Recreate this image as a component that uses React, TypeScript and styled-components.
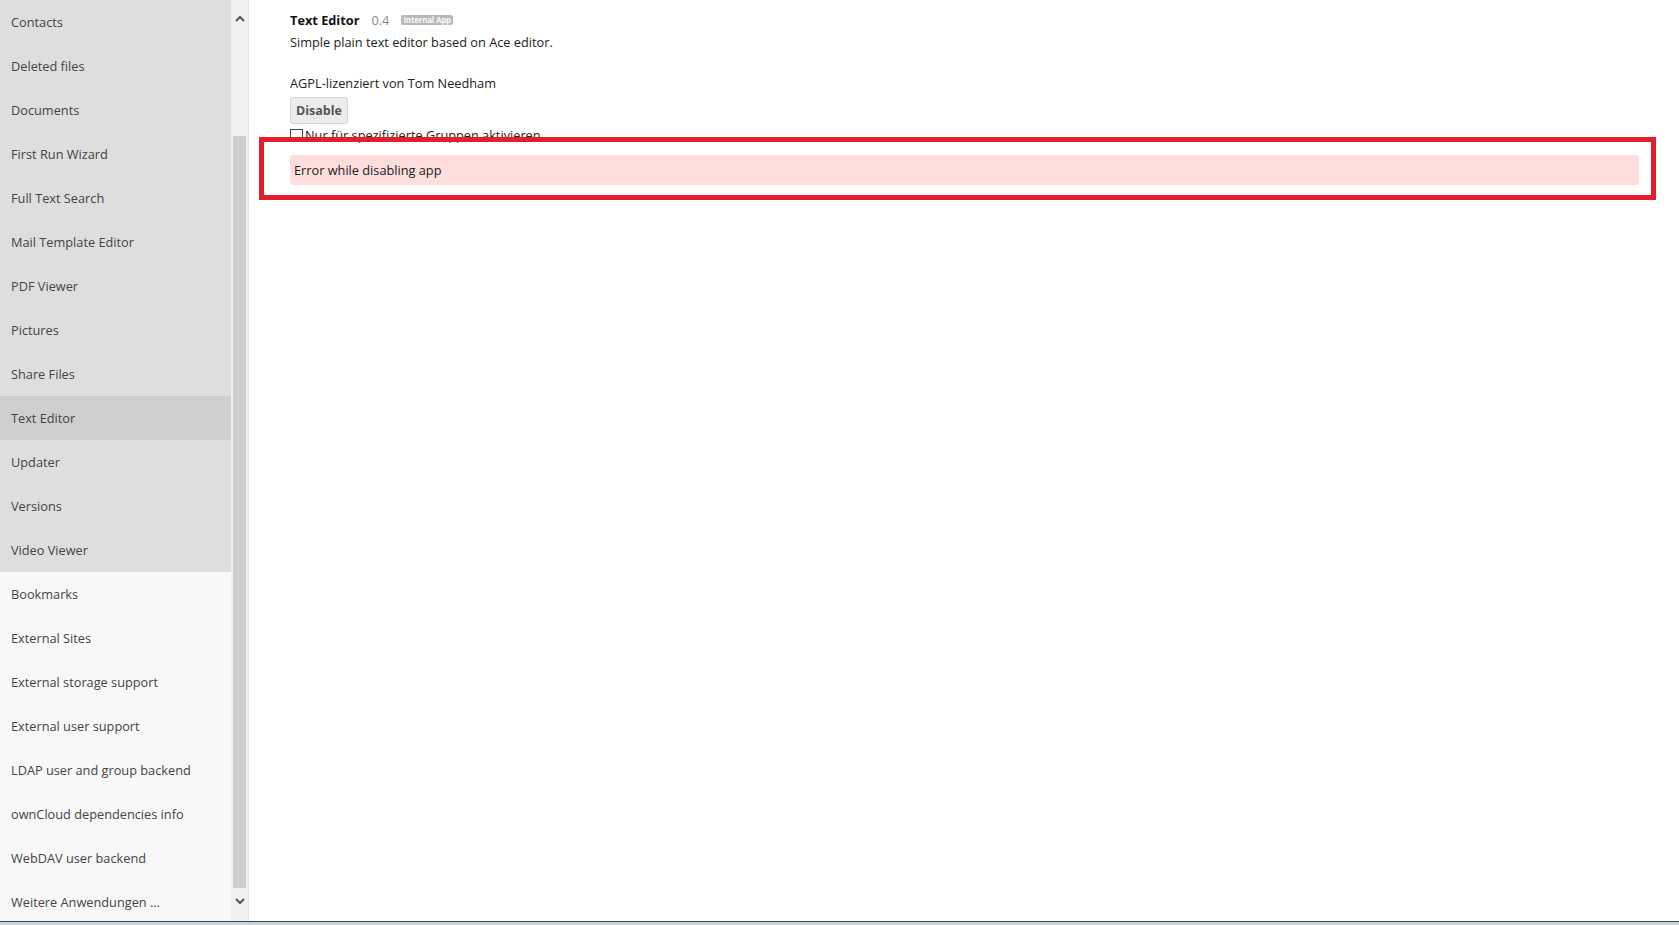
import { createGlobalStyle, styled } from "styled-components";

const GlobalStyle = createGlobalStyle`
  html, body {
    margin: 0;
    padding: 0;
    background: #ffffff;
    font-family: "Open Sans", "Liberation Sans", sans-serif;
    font-size: 12.75px;
    color: #222;
    overflow: hidden;
  }
`;

const Page = styled.div`
  display: flex;
  flex-direction: column;
  height: 100vh;
  position: relative;
`;

const Main = styled.div`
  display: flex;
  flex: 1;
  min-height: 0;
`;

const Sidebar = styled.nav`
  display: flex;
  width: 248px;
  flex-shrink: 0;
  border-right: 1px solid #e4e4e4;
  overflow: hidden;
`;

const AppList = styled.ul`
  list-style: none;
  margin: 0;
  padding: 0;
  width: 231px;
  flex-shrink: 0;
`;

const AppItem = styled.li<{ $enabled: boolean; $active?: boolean }>`
  height: 44px;
  flex-shrink: 0;
  display: flex;
  align-items: center;
  padding-left: 11px;
  color: #444;
  background: ${(p) => (p.$active ? "#cfcfcf" : p.$enabled ? "#dedede" : "#f8f8f8")};
  white-space: nowrap;
`;

const ScrollBar = styled.div`
  width: 17px;
  display: flex;
  flex-direction: column;
  background: #f0f0f0;
`;

const ScrollArrow = styled.div<{ $size: number; $after?: number }>`
  height: ${(p) => p.$size}px;
  margin-bottom: ${(p) => p.$after ?? 0}px;
  display: flex;
  align-items: center;
  justify-content: center;
  flex-shrink: 0;
`;

const ScrollTrack = styled.div`
  flex: 1;
  display: flex;
  flex-direction: column;
  padding: 100px 2px 0 2px;
`;

const ScrollThumb = styled.div`
  flex: 1;
  background: #cdcdcd;
`;

const Content = styled.main`
  flex: 1;
  padding: 10px 40px 0 41px;
`;

const TitleRow = styled.div`
  display: flex;
  align-items: center;
  gap: 12px;
  line-height: 20px;
`;

const AppName = styled.span`
  font-weight: bold;
  color: #111;
`;

const Version = styled.span`
  color: #888;
`;

const Badge = styled.span`
  font-size: 8px;
  font-weight: bold;
  line-height: 10px;
  padding: 0 2px;
  border-radius: 2px;
  background: #b8b8b8;
  color: #f8f8f8;
  letter-spacing: -0.2px;
`;

const Line = styled.p<{ $gap: number }>`
  margin: ${(p) => p.$gap}px 0 0;
  line-height: 20px;
`;

const Button = styled.button`
  display: block;
  margin-top: 4px;
  height: 27px;
  padding: 0 5px;
  font-family: inherit;
  font-size: 12.5px;
  font-weight: bold;
  color: #555;
  background: #ececec;
  border: 1px solid #d6d6d6;
  border-radius: 3px;
`;

const CheckRow = styled.label`
  display: flex;
  align-items: center;
  gap: 2px;
  margin-top: 1px;
  height: 20px;
`;

const CheckBox = styled.input`
  appearance: none;
  margin: 0;
  width: 13px;
  height: 13px;
  border: 1px solid #444;
  background: #fff;
`;

const ErrorBox = styled.div`
  margin-top: 10px;
  height: 30px;
  display: flex;
  align-items: center;
  padding: 0 4px;
  background: #ffdddd;
  border-radius: 3px;
  color: #222;
`;

const Highlight = styled.div`
  position: absolute;
  left: 259px;
  top: 137px;
  width: 1397px;
  height: 63px;
  box-sizing: border-box;
  border: 5px solid #e41f2b;
  pointer-events: none;
`;

const TaskbarEdge = styled.div`
  height: 3px;
  flex-shrink: 0;
  border-top: 1px solid #3a4656;
  background: #cad3dc;
`;

const enabledApps = [
  "Contacts",
  "Deleted files",
  "Documents",
  "First Run Wizard",
  "Full Text Search",
  "Mail Template Editor",
  "PDF Viewer",
  "Pictures",
  "Share Files",
  "Text Editor",
  "Updater",
  "Versions",
  "Video Viewer",
];

const otherApps = [
  "Bookmarks",
  "External Sites",
  "External storage support",
  "External user support",
  "LDAP user and group backend",
  "ownCloud dependencies info",
  "WebDAV user backend",
  "Weitere Anwendungen …",
];

function Chevron({ up }: { up?: boolean }) {
  return (
    <svg width="10" height="7" viewBox="0 0 10 7">
      <path
        d={up ? "M1 6 L5 2 L9 6" : "M1 1 L5 5 L9 1"}
        fill="none"
        stroke="#555"
        strokeWidth="2"
      />
    </svg>
  );
}

export default function App() {
  return (
    <>
      <GlobalStyle />
      <Page>
        <Main>
          <Sidebar>
            <AppList>
              {enabledApps.map((name) => (
                <AppItem key={name} $enabled $active={name === "Text Editor"}>
                  {name}
                </AppItem>
              ))}
              {otherApps.map((name) => (
                <AppItem key={name} $enabled={false}>
                  {name}
                </AppItem>
              ))}
            </AppList>
            <ScrollBar>
              <ScrollArrow $size={36}>
                <Chevron up />
              </ScrollArrow>
              <ScrollTrack>
                <ScrollThumb />
              </ScrollTrack>
              <ScrollArrow $size={26} $after={7}>
                <Chevron />
              </ScrollArrow>
            </ScrollBar>
          </Sidebar>
          <Content>
            <TitleRow>
              <AppName>Text Editor</AppName>
              <Version>0.4</Version>
              <Badge>Internal App</Badge>
            </TitleRow>
            <Line $gap={2}>Simple plain text editor based on Ace editor.</Line>
            <Line $gap={21}>AGPL-lizenziert von Tom Needham</Line>
            <Button>Disable</Button>
            <CheckRow>
              <CheckBox type="checkbox" />
              Nur für spezifizierte Gruppen aktivieren
            </CheckRow>
            <ErrorBox>Error while disabling app</ErrorBox>
          </Content>
        </Main>
        <TaskbarEdge />
        <Highlight />
      </Page>
    </>
  );
}
